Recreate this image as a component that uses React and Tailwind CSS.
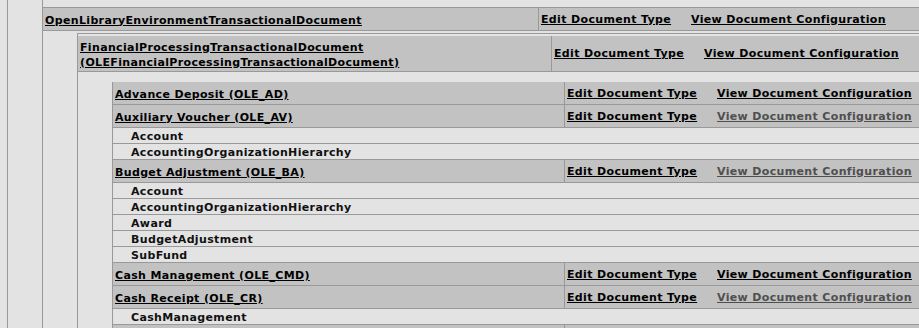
import React from "react";

function Links({ visited }) {
  return (
    <div className="flex items-center pl-[2px] whitespace-nowrap">
      <a href="#" className="w-[150px] shrink-0 underline text-[#000]">Edit Document Type</a>
      <a href="#" className={visited ? "underline text-[#4f4f4f]" : "underline text-[#000]"}>View Document Configuration</a>
    </div>
  );
}

function Header({ lines, leftW, height, visited, empty }) {
  return (
    <div className={"flex shrink-0 bg-[#c2c2c2] border-b border-[#999] " + height}>
      <div className={"shrink-0 flex flex-col justify-center pl-[2px] pt-[2px] " + leftW}>
        {lines.map((l, i) => (
          <a key={i} href="#" className="underline text-[#000] leading-[15px] whitespace-nowrap">{l}</a>
        ))}
      </div>
      <div className="flex-1 border-l border-[#999] flex items-center pt-[2px]">
        {empty ? null : <Links visited={visited} />}
      </div>
    </div>
  );
}

function Sub({ children }) {
  return (
    <div className="h-[16px] shrink-0 border-b border-[#999] pl-[18px] pt-[1px] leading-[15px] text-[#111] whitespace-nowrap">{children}</div>
  );
}

function L3Header({ label, visited, empty }) {
  return <Header lines={label ? [label] : []} leftW="w-[451px]" height="h-[23px]" visited={visited} empty={empty} />;
}

export default function App() {
  return (
    <div className="w-[919px] h-[328px] overflow-hidden bg-[#e3e3e3] font-['DejaVu_Sans',Verdana,sans-serif] font-bold text-[11px] tracking-[0.35px] text-[#111]">
      <div className="flex h-[420px]">
        <div className="w-[7px] shrink-0" />
        <div className="flex-1 flex border-l border-[#999]">
          <div className="w-[34px] shrink-0" />
          <div className="flex-1 flex flex-col border-l border-[#999]">
            <div className="h-[8px] shrink-0 border-b border-[#999]" />
            <Header lines={["OpenLibraryEnvironmentTransactionalDocument"]} leftW="w-[495px]" height="h-[23px]" />
            <div className="flex shrink-0 mt-[2px]">
              <div className="w-[34px] shrink-0" />
              <div className="flex-1 flex flex-col border-l border-t border-[#999] pt-[2px]">
                <Header
                  lines={["FinancialProcessingTransactionalDocument", "(OLEFinancialProcessingTransactionalDocument)"]}
                  leftW="w-[473px]"
                  height="h-[36px]"
                />
                <div className="flex shrink-0 mt-[10px]">
                  <div className="w-[34px] shrink-0" />
                  <div className="flex-1 flex flex-col border-l border-[#999]">
                    <L3Header label="Advance Deposit (OLE_AD)" />
                    <L3Header label="Auxiliary Voucher (OLE_AV)" visited />
                    <Sub>Account</Sub>
                    <Sub>AccountingOrganizationHierarchy</Sub>
                    <L3Header label="Budget Adjustment (OLE_BA)" visited />
                    <Sub>Account</Sub>
                    <Sub>AccountingOrganizationHierarchy</Sub>
                    <Sub>Award</Sub>
                    <Sub>BudgetAdjustment</Sub>
                    <Sub>SubFund</Sub>
                    <L3Header label="Cash Management (OLE_CMD)" />
                    <L3Header label="Cash Receipt (OLE_CR)" visited />
                    <Sub>CashManagement</Sub>
                    <L3Header empty />
                  </div>
                </div>
              </div>
            </div>
          </div>
        </div>
      </div>
    </div>
  );
}
